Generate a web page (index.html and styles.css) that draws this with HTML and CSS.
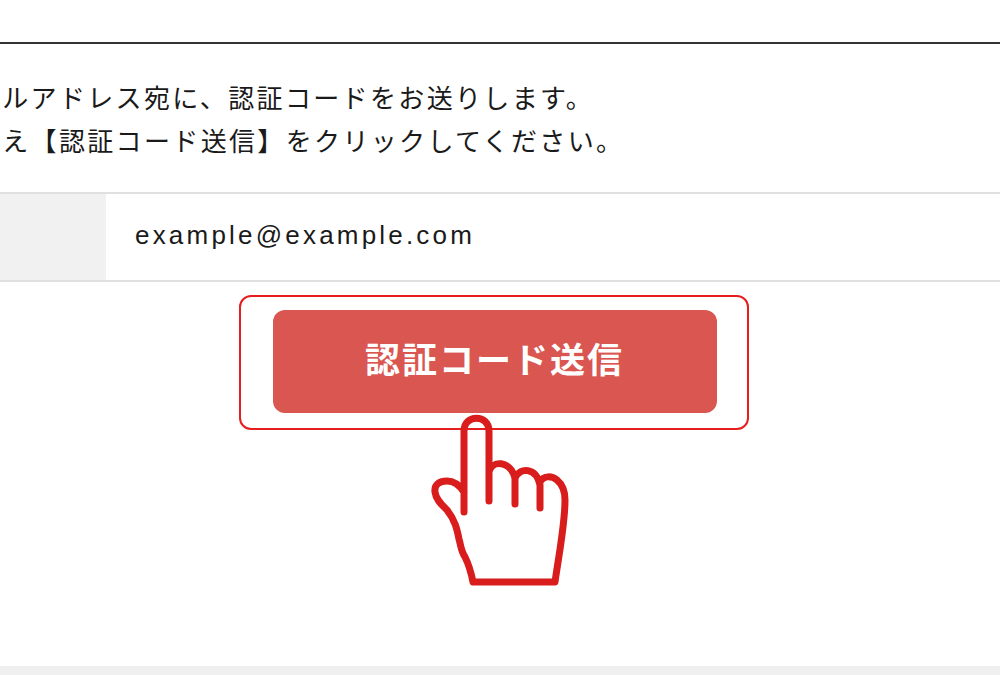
FILE: index.html
```html
<!DOCTYPE html>
<html lang="ja">
<head>
<meta charset="utf-8">
<title>認証コード送信</title>
<link rel="stylesheet" href="styles.css">
</head>
<body>
<main class="page">
  <div class="top-rule"></div>
  <div class="intro">
    <p class="intro-line">メールアドレス宛に、認証コードをお送りします。</p>
    <p class="intro-line">のうえ【認証コード送信】をクリックしてください。</p>
  </div>
  <div class="field-row">
    <div class="field-label"></div>
    <div class="field-value">example@example.com</div>
  </div>
  <div class="action">
    <div class="highlight">
      <button class="send-button" type="button">認証コード送信</button>
    </div>
    <svg class="hand" viewBox="0 0 150 180" aria-hidden="true">
      <path d="M34 98V17C34 0 59 0 59 17V87M59 58C62 46 80 46 85 64V90M85 64C90 53 106 53 110 71V94M110 68C114 61 122 62 127 66C133 71 135 78 135 86C135 110 129 140 125 168H43C41 158 39 151 35 143C31 137 31 132 29 125C27 115 25 106 17 96C12 91 6 86 5 78C4 70 10 67 17 67C24 67 30 72 34 78" />
    </svg>
  </div>
  <div class="footer-band"></div>
</main>
</body>
</html>
```
FILE: styles.css
```css
html, body {
  margin: 0;
  padding: 0;
  background: #fff;
}

.page {
  width: 1000px;
  height: 675px;
  overflow: hidden;
  display: flex;
  flex-direction: column;
  padding-top: 42px;
  box-sizing: border-box;
  font-family: "Noto Sans CJK JP", "Liberation Sans", sans-serif;
  color: #1a1a1a;
}

.top-rule {
  flex: none;
  height: 2px;
  background: #333;
}

.intro {
  flex: none;
  height: 148px;
  padding-top: 31px;
  box-sizing: border-box;
  margin-left: -54.5px;
  white-space: nowrap;
}

.intro-line {
  margin: 0;
  font-size: 26px;
  line-height: 43px;
  letter-spacing: 2.35px;
}

.field-row {
  flex: none;
  display: flex;
  height: 90px;
  box-sizing: border-box;
  border-top: 2px solid #e0e0e0;
  border-bottom: 2px solid #e0e0e0;
}

.field-label {
  width: 106px;
  background: #f1f1f1;
}

.field-value {
  flex: 1;
  display: flex;
  align-items: center;
  padding-left: 29px;
  padding-bottom: 4px;
  font-family: "Liberation Sans", Arial, sans-serif;
  font-size: 26px;
  letter-spacing: 3.2px;
  color: #1a1a1a;
}

.action {
  flex: 1;
  position: relative;
  display: flex;
  flex-direction: column;
  align-items: center;
  padding-top: 13px;
  padding-right: 12px;
}

.highlight {
  width: 510px;
  height: 135px;
  box-sizing: border-box;
  border: 2px solid #e61e1e;
  border-radius: 12px;
  padding-bottom: 3px;
  padding-left: 1px;
  display: flex;
  align-items: center;
  justify-content: center;
}

.send-button {
  width: 444px;
  height: 103px;
  border: 0;
  border-radius: 12px;
  background: #da5650;
  color: #fff;
  font-family: "Noto Sans CJK JP", sans-serif;
  font-weight: 700;
  font-size: 35px;
  letter-spacing: 2px;
  padding: 0 0 8px;
}

.hand {
  position: absolute;
  left: 430px;
  top: 132px;
  width: 150px;
  height: 180px;
  overflow: visible;
  fill: none;
  stroke: #d91c1c;
  stroke-width: 7px;
  stroke-linecap: round;
  stroke-linejoin: round;
}

.footer-band {
  flex: none;
  height: 9px;
  background: #f0f0f0;
}
```
